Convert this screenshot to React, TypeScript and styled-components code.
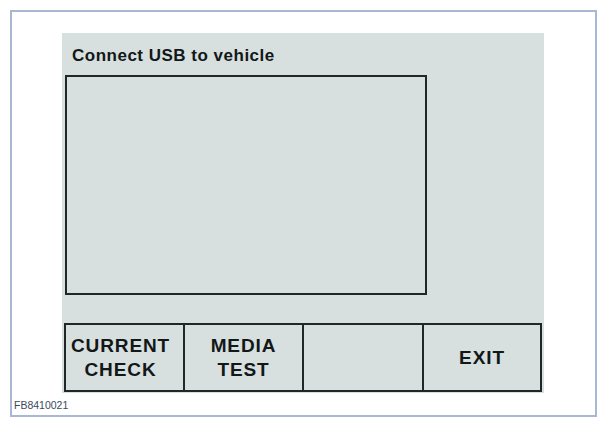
import React from "react";
import styled, { createGlobalStyle } from "styled-components";

const Global = createGlobalStyle`
  html, body { margin: 0; padding: 0; background: #ffffff; }
  body { font-family: "Liberation Sans", Arial, sans-serif; }
`;

const Frame = styled.div`
  box-sizing: border-box;
  margin: 10px 0 0 10px;
  width: 587px;
  height: 407px;
  border: 2px solid #a9b8d2;
  background: #ffffff;
  display: flex;
  flex-direction: column;
  padding: 21px 0 0 50px;
  position: relative;
`;

const Panel = styled.div`
  box-sizing: border-box;
  width: 482px;
  height: 360px;
  background: #d7dfdf;
  display: flex;
  flex-direction: column;
`;

const Title = styled.div`
  margin: 13px 0 0 10px;
  font-size: 17px;
  line-height: 20px;
  font-weight: 700;
  letter-spacing: 0.5px;
  color: #121717;
`;

const Screen = styled.div`
  box-sizing: border-box;
  margin: 9px 0 0 3px;
  width: 362px;
  height: 220px;
  border: 2px solid #1f2827;
`;

const ButtonRow = styled.div`
  box-sizing: border-box;
  margin: 28px 0 0 2px;
  width: 478px;
  height: 69px;
  border: 2px solid #1f2827;
  display: grid;
  grid-template-columns: 117px 119px 120px 1fr;
`;

const Key = styled.div<{ $first?: boolean }>`
  display: flex;
  align-items: center;
  justify-content: center;
  text-align: center;
  border-left: ${(p) => (p.$first ? "none" : "2px solid #1f2827")};
  padding-right: ${(p) => (p.$first ? "8px" : "0")};
  font-size: 19px;
  line-height: 24px;
  font-weight: 700;
  letter-spacing: 0.9px;
  color: #121717;
`;

const Code = styled.div`
  position: absolute;
  left: 2px;
  bottom: 4px;
  font-size: 10.5px;
  line-height: 12px;
  color: #3a4a5a;
`;

export default function App() {
  return (
    <>
      <Global />
      <Frame>
        <Panel>
          <Title>Connect USB to vehicle</Title>
          <Screen />
          <ButtonRow>
            <Key $first>
              CURRENT
              <br />
              CHECK
            </Key>
            <Key>
              MEDIA
              <br />
              TEST
            </Key>
            <Key />
            <Key>EXIT</Key>
          </ButtonRow>
        </Panel>
        <Code>FB8410021</Code>
      </Frame>
    </>
  );
}
